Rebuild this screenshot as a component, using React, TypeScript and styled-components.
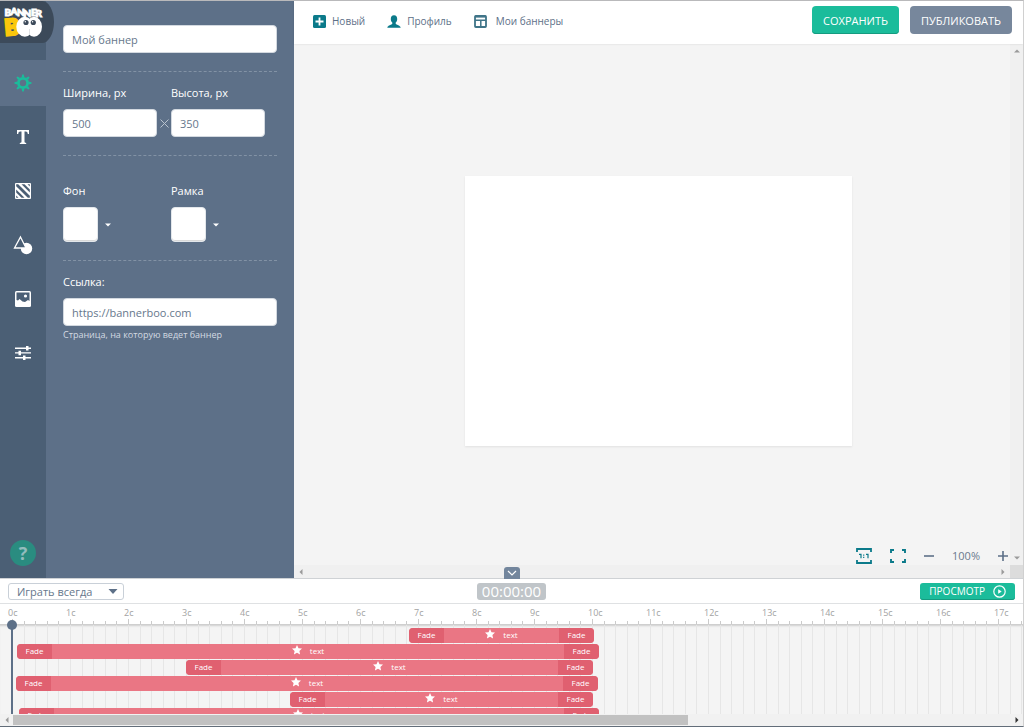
import React from 'react';
import styled, { createGlobalStyle } from 'styled-components';

const colors = {
  rail: '#4b5f75',
  panel: '#5d7088',
  logo: '#3c4a5a',
  green: '#1bbc9b',
  teal: '#0b7a8a',
  slate: '#5d7088',
  bar: '#ea7684',
  barEdge: '#e06070',
};

const SECOND = 58;

const GlobalStyle = createGlobalStyle`
  *, *::before, *::after { box-sizing: border-box; }
  body {
    margin: 0;
    font-family: "Open Sans", "Noto Sans", sans-serif;
    font-size: 11px;
    color: ${colors.slate};
    background: #fff;
  }
  button, input, select { font: inherit; color: inherit; margin: 0; }
  button { border: 0; padding: 0; background: none; cursor: pointer; }
  svg { display: block; }
`;

const Page = styled.div`
  display: flex;
  flex-direction: column;
  min-height: 100vh;
  border-top: 1px solid #b9b9bb;
  border-right: 1px solid #d0d0d0;
  border-bottom: 1px solid #626d79;
  overflow: hidden;
`;

const Workspace = styled.div`
  flex: 1;
  display: grid;
  grid-template-columns: 46px 248px 1fr;
`;

/* Left rail */

const Rail = styled.nav`
  display: flex;
  flex-direction: column;
  gap: 8px;
  background: ${colors.rail};
  padding-bottom: 12px;
`;

const Logo = styled.a`
  position: relative;
  z-index: 1;
  width: 54px;
  height: 42px;
  margin-bottom: 9px;
  background: ${colors.logo};
  border-radius: 0 12px 12px 0 / 0 21px 21px 0;
`;

const RailButton = styled.button<{ $active?: boolean }>`
  display: grid;
  place-items: center;
  height: 46px;
  color: ${(p) => (p.$active ? colors.green : '#fff')};
  background: ${(p) => (p.$active ? colors.panel : 'transparent')};
`;

const HelpButton = styled.button`
  width: 26px;
  height: 26px;
  margin: auto auto 0;
  border-radius: 50%;
  background: #2a8c80;
  color: #93bcbd;
  font-size: 18px;
  line-height: 26px;
  font-weight: 700;
`;

/* Settings panel */

const Panel = styled.form`
  background: ${colors.panel};
  padding: 24px 17px;
  color: #fff;
`;

const Section = styled.section<{ $top?: number; $last?: boolean }>`
  padding: ${(p) => p.$top ?? 12}px 0 18px;
  border-bottom: ${(p) => (p.$last ? '0' : '1px dashed #8292a5')};
`;

const Columns = styled.div`
  display: flex;
`;

const Column = styled.div`
  flex: 0 0 108px;
`;

const Label = styled.label`
  display: block;
  height: 18px;
  margin-bottom: 7px;
  font-size: 11px;
  line-height: 18px;
  font-weight: 500;
`;

const TextInput = styled.input`
  display: block;
  width: 100%;
  height: 28px;
  padding: 0 8px;
  border: 1px solid #d3d9e0;
  border-radius: 4px;
  background: #fff;
  color: #66778c;
  font-size: 11px;
  outline: 0;
`;

const SizeField = styled.div`
  display: grid;
  grid-template-columns: 94px 14px;
  align-items: center;
  justify-items: center;
`;

const SwatchField = styled.div`
  display: flex;
  align-items: center;
  gap: 7px;
`;

const Swatch = styled.button`
  width: 35px;
  height: 35px;
  border: 1px solid #e3e7eb;
  border-radius: 4px;
  background: #fff;
  box-shadow: inset 0 -1px 0 rgba(0, 0, 0, 0.15);
`;

const Hint = styled.p`
  margin: 0;
  font-size: 9px;
  line-height: 18px;
  color: #d3dae2;
`;

/* Main area */

const Main = styled.main`
  display: flex;
  flex-direction: column;
  min-width: 0;
`;

const TopBar = styled.header`
  display: flex;
  align-items: flex-start;
  justify-content: space-between;
  height: 43px;
  padding: 5px 11px 0 19px;
  background: #fff;
  box-shadow: 0 0 2px rgba(0, 0, 0, 0.12);
  z-index: 0;
`;

const Menu = styled.nav`
  display: flex;
  gap: 22px;
`;

const MenuLink = styled.a`
  display: flex;
  align-items: center;
  gap: 6px;
  height: 30px;
  font-size: 10px;
  color: ${colors.slate};
  text-decoration: none;
  svg { color: ${colors.teal}; }
`;

const Actions = styled.div`
  display: flex;
  gap: 11px;
`;

const ActionButton = styled.button<{ $primary?: boolean }>`
  height: 28px;
  padding: 0 11px;
  border-radius: 4px;
  color: #fff;
  font-size: 11px;
  font-weight: 500;
  background: ${(p) => (p.$primary ? colors.green : '#77879c')};
  box-shadow: ${(p) => (p.$primary ? 'inset 0 -1px 0 #159b80' : 'none')};
`;

const Canvas = styled.div`
  flex: 1;
  display: grid;
  grid-template-columns: 1fr 13px;
  grid-template-rows: 1fr 13px;
  background: #f4f4f4;
`;

const Stage = styled.div`
  grid-area: 1 / 1 / -1 / -1;
  display: grid;
  place-items: center;
`;

const Artboard = styled.div`
  width: 387px;
  height: 270px;
  background: #fff;
  box-shadow: 0 1px 2px rgba(0, 0, 0, 0.08);
`;

const VerticalScroll = styled.div`
  grid-area: 1 / 2;
  display: flex;
  flex-direction: column;
  justify-content: space-between;
  align-items: center;
  padding: 4px 0;
  background: #f0f0f0;
`;

const HorizontalScroll = styled.div`
  grid-area: 2 / 1;
  display: flex;
  justify-content: space-between;
  align-items: center;
  padding: 0 4px;
  background: #f0f0f0;
`;

const ScrollCorner = styled.div`
  grid-area: 2 / 2;
  background: #dcdcdc;
`;

const ZoomBar = styled.div`
  grid-area: 1 / 1;
  align-self: end;
  justify-self: end;
  display: flex;
  align-items: center;
  gap: 18px;
  padding: 0 2px 0 0;
  font-size: 11px;
  line-height: 18px;
  color: #6b7a8d;
  z-index: 0;
`;

/* Timeline */

const Timeline = styled.section`
  position: relative;
  border-top: 1px solid #cfd2d5;
  background: #fff;
`;

const CollapseButton = styled.button`
  position: absolute;
  left: 50%;
  bottom: 100%;
  display: grid;
  place-items: center;
  width: 16px;
  height: 12px;
  margin-left: -8px;
  border-radius: 3px 3px 0 0;
  background: #73869d;
`;

const TimelineBar = styled.div`
  display: grid;
  grid-template-columns: 1fr auto 1fr;
  align-items: center;
  height: 25px;
  padding: 0 8px;
  border-bottom: 1px solid #dfe1e3;
`;

const SelectBox = styled.div`
  display: grid;
  grid-template-columns: 1fr 16px;
  align-items: center;
  width: 116px;
  svg { grid-area: 1 / 2; pointer-events: none; }
`;

const Select = styled.select`
  grid-area: 1 / 1 / 2 / -1;
  appearance: none;
  width: 100%;
  height: 17px;
  padding: 0 8px;
  border: 1px solid #c9d0d8;
  border-radius: 3px;
  background: #fff;
  color: #66778c;
  font-size: 11px;
  line-height: 15px;
`;

const TimeCode = styled.output`
  padding: 0 5px;
  border-radius: 3px;
  background: #c0c5c9;
  color: #fff;
  font-size: 15px;
  line-height: 17px;
`;

const PreviewButton = styled.button`
  justify-self: end;
  display: flex;
  align-items: center;
  gap: 8px;
  height: 17px;
  padding: 0 9px;
  border-radius: 3px;
  background: ${colors.green};
  box-shadow: inset 0 -1px 0 #159b80;
  color: #fff;
  font-size: 10px;
  font-weight: 500;
`;

const Ruler = styled.div`
  height: 21px;
  overflow: hidden;
  border-bottom: 1px solid #cfcfcf;
`;

const RulerLabels = styled.div`
  display: flex;
  margin-left: 8px;
  height: 15px;
  font-size: 9px;
  line-height: 17px;
  color: #a3a3a3;
`;

const RulerLabel = styled.span`
  flex: 0 0 ${SECOND}px;
`;

const Ticks = styled.div`
  display: flex;
  margin-left: 12px;
`;

const TickGroup = styled.div`
  flex: 0 0 ${SECOND}px;
  display: flex;
  align-items: flex-end;
`;

const Tick = styled.i<{ $major?: boolean }>`
  flex: 1;
  height: ${(p) => (p.$major ? 5 : 3)}px;
  border-left: 1px solid #cbcbcb;
`;

const Tracks = styled.div`
  display: grid;
  height: 89px;
  overflow: hidden;
  background: #f4f4f4;
  box-shadow: inset 0 2px 2px -1px rgba(0, 0, 0, 0.15);
`;

const GridLines = styled(Ticks)`
  grid-area: 1 / 1;
  min-width: 0;
`;

const GridLine = styled.i`
  flex: 1;
  align-self: stretch;
  border-left: 1px solid #e6e6e6;
`;

const TrackList = styled.div`
  grid-area: 1 / 1;
  display: flex;
  flex-direction: column;
  gap: 1px;
  min-width: 0;
  padding-top: 3px;
`;

const Bar = styled.div`
  flex: 0 0 15px;
  display: flex;
  justify-content: space-between;
  border-radius: 4px;
  overflow: hidden;
  background: ${colors.bar};
  color: #fff;
  font-size: 8px;
  line-height: 14px;
`;

const Fade = styled.span`
  width: 35px;
  text-align: center;
  font-weight: 500;
  background: ${colors.barEdge};
`;

const BarTitle = styled.span`
  display: flex;
  align-items: flex-start;
  gap: 8px;
  svg { margin-top: 1px; }
`;

const Playhead = styled.div`
  position: absolute;
  left: 11px;
  top: 46px;
  bottom: 12px;
  width: 2px;
  background: ${colors.slate};
  &::before {
    content: '';
    position: absolute;
    left: -4px;
    top: -5px;
    width: 10px;
    height: 10px;
    border-radius: 50%;
    background: ${colors.slate};
  }
`;

const TimelineScroll = styled.div`
  display: grid;
  grid-template-columns: 13px 1fr 13px;
  align-items: center;
  justify-items: center;
  height: 12px;
  background: #f1f1f1;
`;

const ScrollThumb = styled.div`
  justify-self: start;
  width: 67.7%;
  height: 10px;
  background: #c1c1c1;
`;

type Direction = 'up' | 'down' | 'left' | 'right';

const arrowShapes: Record<Direction, string> = {
  up: 'M0 4.5L3 1.5L6 4.5Z',
  down: 'M0 1.5L3 4.5L6 1.5Z',
  left: 'M4.5 0L1.5 3L4.5 6Z',
  right: 'M1.5 0L4.5 3L1.5 6Z',
};

const Arrow = ({ dir, color = '#9a9a9a' }: { dir: Direction; color?: string }) => (
  <svg width="6" height="6" viewBox="0 0 6 6" fill={color}>
    <path d={arrowShapes[dir]} />
  </svg>
);

const LogoArt = () => (
  <svg width="54" height="42" viewBox="0 0 54 42" fontFamily="Lato, sans-serif" fontWeight="900">
    <g fill="#fff" stroke="#fff" strokeWidth="0.9" fontSize="10">
      <text x="4.500" y="14.500">B</text>
      <text x="10.500" y="14">A</text>
      <text x="17" y="14.500">N</text>
      <text x="23.500" y="15.500">N</text>
      <text x="31" y="15">E</text>
      <text x="35.500" y="15.500">R</text>
    </g>
    <text x="4.500" y="34" fontSize="22" fill="#fbc70c" stroke="#fbc70c" strokeWidth="2.600" transform="rotate(-5 10 26)">B</text>
    <ellipse cx="24.800" cy="25.800" rx="8.500" ry="10" fill="#fff" />
    <ellipse cx="34" cy="25.800" rx="8" ry="10" fill="#fff" />
    <circle cx="26" cy="21.500" r="2.600" fill="#3c4a5a" />
    <circle cx="33.300" cy="21.500" r="2.600" fill="#3c4a5a" />
    <circle cx="25.300" cy="20.800" r="0.700" fill="#fff" />
    <circle cx="32.600" cy="20.800" r="0.700" fill="#fff" />
    <path d="M29.500 28v6" stroke="#c9ced4" strokeWidth="0.600" />
  </svg>
);

const GearIcon = () => (
  <svg width="18" height="18" viewBox="0 0 18 18" fill="none" stroke="currentColor">
    <circle cx="9" cy="9" r="4.600" strokeWidth="2.800" />
    {[0, 45, 90, 135, 180, 225, 270, 315].map((a) => (
      <path key={a} d="M7.600 3.500L8.200 0.500H9.800L10.400 3.500Z" fill="currentColor" stroke="none" transform={`rotate(${a} 9 9)`} />
    ))}
  </svg>
);

const TextIcon = () => (
  <svg width="14" height="16" viewBox="0 0 14 16" fill="#fff">
    <path d="M1 1H13V5H11.800C11.500 3.200 11 2.500 9.600 2.500H8.500V12.500C8.500 13.500 9 13.800 10.200 13.900V15H3.800V13.900C5 13.800 5.500 13.500 5.500 12.500V2.500H4.400C3 2.500 2.500 3.200 2.200 5H1Z" />
  </svg>
);

const PatternIcon = () => (
  <svg width="16" height="16" viewBox="0 0 16 16">
    <rect width="16" height="16" rx="1" fill="#fff" />
    <g fill="#4b5f75">
      <path d="M1.200 1.200H3.200L14.800 12.800V14.800H12.800L1.200 3.200Z" />
      <path d="M6.500 1.200H9.500L14.800 6.500V9.500Z" />
      <path d="M1.200 6.500V9.500L6.500 14.800H9.500Z" />
      <path d="M12.500 1.200H14.800V3.500ZM1.200 12.500V14.800H3.500Z" />
    </g>
  </svg>
);

const ShapesIcon = () => (
  <svg width="20" height="20" viewBox="0 0 20 20">
    <circle cx="13.500" cy="13.500" r="5.700" fill="#fff" />
    <path d="M7.500 2L13 13H1.500Z" fill="#4b5f75" stroke="#fff" strokeWidth="1.300" />
  </svg>
);

const ImageIcon = () => (
  <svg width="16" height="16" viewBox="0 0 16 16">
    <rect width="16" height="16" rx="1.500" fill="#fff" />
    <path d="M1.500 1.500H14.500V10L13 9L10 11L7.500 10.500L4.500 8L3 9.500L1.500 9Z" fill="#4b5f75" />
    <circle cx="10.500" cy="5" r="1.600" fill="#fff" />
  </svg>
);

const SlidersIcon = () => (
  <svg width="16" height="16" viewBox="0 0 16 16" fill="#fff">
    <path d="M0 2.600H16V3.900H0ZM0 7.300H16V8.600H0ZM0 12.100H16V13.400H0Z" />
    <path d="M11 1H13.500V5.500H11ZM3.500 5.700H6V10.200H3.500ZM8 10.500H10.500V15H8Z" />
  </svg>
);

const PlusBoxIcon = () => (
  <svg width="13" height="13" viewBox="0 0 13 13">
    <rect width="13" height="13" rx="1.500" fill="currentColor" />
    <path d="M6.500 2.500V10.500M2.500 6.500H10.500" stroke="#fff" strokeWidth="1.800" />
  </svg>
);

const UserIcon = () => (
  <svg width="14" height="13" viewBox="0 0 14 13" fill="currentColor">
    <path d="M7 0.200C9.200 0.200 10.200 1.800 10.200 4C10.200 5.700 9.500 7 8.700 7.600V8.800C9 9.800 13.300 10.200 13.700 12.700H0.300C0.700 10.200 5 9.800 5.300 8.800V7.600C4.500 7 3.800 5.700 3.800 4C3.800 1.800 4.800 0.200 7 0.200Z" />
  </svg>
);

const LayoutIcon = () => (
  <svg width="16" height="13" viewBox="0 0 16 13" fill="none" stroke="#3f7488" strokeWidth="1.800">
    <rect x="1" y="1" width="11" height="11" rx="0.800" />
    <path d="M1 5.200H12M6.800 5.200V12" strokeWidth="1.500" />
    <path d="M1 1.600H12" strokeWidth="2" />
  </svg>
);

const ActualSizeIcon = () => (
  <svg width="16" height="16" viewBox="0 0 16 16" fill="none" stroke={colors.teal}>
    <path d="M1 4V1H15V4M1 12V15H15V12" strokeWidth="1.800" />
    <path d="M3 6.300H5V10.300M10 6.300H12V10.300" strokeWidth="1.200" />
    <path d="M7.700 6.500V7.700M7.700 8.800V10" strokeWidth="1.200" />
  </svg>
);

const FullscreenIcon = () => (
  <svg width="16" height="14" viewBox="0 0 16 14" fill="none" stroke={colors.teal} strokeWidth="1.900">
    <path d="M1 4V1H4M12 1H15V4M15 10V13H12M4 13H1V10" />
  </svg>
);

const MinusIcon = () => (
  <svg width="10" height="10" viewBox="0 0 10 10" stroke={colors.slate} strokeWidth="1.600">
    <path d="M0 5H10" />
  </svg>
);

const PlusIcon = () => (
  <svg width="10" height="10" viewBox="0 0 10 10" stroke={colors.slate} strokeWidth="1.600">
    <path d="M0 5H10M5 0V10" />
  </svg>
);

const StarIcon = () => (
  <svg width="10" height="10" viewBox="0 0 10 10" fill="#fff">
    <path d="M5 0L6.500 3.200L10 3.600L7.400 6L8.100 9.500L5 7.800L1.900 9.500L2.600 6L0 3.600L3.500 3.200Z" />
  </svg>
);

const PlayIcon = () => (
  <svg width="13" height="13" viewBox="0 0 13 13" fill="none" stroke="#fff">
    <circle cx="6.500" cy="6.500" r="5.700" strokeWidth="1.200" />
    <path d="M5.200 4.300L8.700 6.500L5.200 8.700Z" fill="#fff" stroke="none" />
  </svg>
);

const tools = [
  { name: 'Текст', icon: <TextIcon /> },
  { name: 'Фон', icon: <PatternIcon /> },
  { name: 'Фигуры', icon: <ShapesIcon /> },
  { name: 'Изображения', icon: <ImageIcon /> },
  { name: 'Настройки', icon: <SlidersIcon /> },
];

const seconds = Array.from({ length: 18 }, (_, i) => i);
const fifths = [0, 1, 2, 3, 4];

const layers = [
  { start: 409, end: 594 },
  { start: 17, end: 599 },
  { start: 186, end: 593 },
  { start: 16, end: 598 },
  { start: 290, end: 593 },
  { start: 19, end: 599 },
];

export default function App() {
  return (
    <>
      <GlobalStyle />
      <Page>
        <Workspace>
          <Rail>
            <Logo href="#" aria-label="BannerBoo">
              <LogoArt />
            </Logo>
            <RailButton $active aria-label="Параметры">
              <GearIcon />
            </RailButton>
            {tools.map((t) => (
              <RailButton key={t.name} aria-label={t.name}>
                {t.icon}
              </RailButton>
            ))}
            <HelpButton>?</HelpButton>
          </Rail>

          <Panel>
            <TextInput aria-label="Название" defaultValue="Мой баннер" />
            <Section $top={0} />
            <Section>
              <Columns>
                <Column>
                  <Label htmlFor="width">Ширина, px</Label>
                  <SizeField>
                    <TextInput id="width" defaultValue="500" />
                    <svg width="9" height="9" viewBox="0 0 9 9" stroke="#b9c3ce" strokeWidth="1">
                      <path d="M0.500 0.500L8.500 8.500M8.500 0.500L0.500 8.500" />
                    </svg>
                  </SizeField>
                </Column>
                <Column>
                  <Label htmlFor="height">Высота, px</Label>
                  <SizeField>
                    <TextInput id="height" defaultValue="350" />
                  </SizeField>
                </Column>
              </Columns>
            </Section>
            <Section $top={26}>
              <Columns>
                <Column>
                  <Label htmlFor="fill">Фон</Label>
                  <SwatchField>
                    <Swatch id="fill" type="button" />
                    <Arrow dir="down" color="#fff" />
                  </SwatchField>
                </Column>
                <Column>
                  <Label htmlFor="frame">Рамка</Label>
                  <SwatchField>
                    <Swatch id="frame" type="button" />
                    <Arrow dir="down" color="#fff" />
                  </SwatchField>
                </Column>
              </Columns>
            </Section>
            <Section $last>
              <Label htmlFor="link">Ссылка:</Label>
              <TextInput id="link" defaultValue="https://bannerboo.com" />
              <Hint>Страница, на которую ведет баннер</Hint>
            </Section>
          </Panel>

          <Main>
            <TopBar>
              <Menu>
                <MenuLink href="#"><PlusBoxIcon />Новый</MenuLink>
                <MenuLink href="#"><UserIcon />Профиль</MenuLink>
                <MenuLink href="#"><LayoutIcon />Мои баннеры</MenuLink>
              </Menu>
              <Actions>
                <ActionButton $primary>СОХРАНИТЬ</ActionButton>
                <ActionButton>ПУБЛИКОВАТЬ</ActionButton>
              </Actions>
            </TopBar>
            <Canvas>
              <Stage>
                <Artboard />
              </Stage>
              <VerticalScroll>
                <Arrow dir="up" />
                <Arrow dir="down" />
              </VerticalScroll>
              <HorizontalScroll>
                <Arrow dir="left" />
                <Arrow dir="right" />
              </HorizontalScroll>
              <ScrollCorner />
              <ZoomBar>
                <button aria-label="Реальный размер"><ActualSizeIcon /></button>
                <button aria-label="Во весь экран"><FullscreenIcon /></button>
                <button aria-label="Уменьшить"><MinusIcon /></button>
                <span>100%</span>
                <button aria-label="Увеличить"><PlusIcon /></button>
              </ZoomBar>
            </Canvas>
          </Main>
        </Workspace>

        <Timeline>
          <CollapseButton aria-label="Свернуть">
            <svg width="10" height="6" viewBox="0 0 10 6" fill="none" stroke="#fff" strokeWidth="1.200">
              <path d="M1 1L5 5L9 1" />
            </svg>
          </CollapseButton>
          <TimelineBar>
            <SelectBox>
              <Select aria-label="Повтор">
                <option>Играть всегда</option>
              </Select>
              <svg width="10" height="5" viewBox="0 0 10 5" fill={colors.slate}>
                <path d="M0.500 0H9.500L5 5Z" />
              </svg>
            </SelectBox>
            <TimeCode>00:00:00</TimeCode>
            <PreviewButton>
              ПРОСМОТР
              <PlayIcon />
            </PreviewButton>
          </TimelineBar>
          <Ruler>
            <RulerLabels>
              {seconds.map((s) => (
                <RulerLabel key={s}>{s}с</RulerLabel>
              ))}
            </RulerLabels>
            <Ticks>
              {seconds.map((s) => (
                <TickGroup key={s}>
                  {fifths.map((f) => (
                    <Tick key={f} $major={f === 0} />
                  ))}
                </TickGroup>
              ))}
            </Ticks>
          </Ruler>
          <Tracks>
            <GridLines>
              {seconds.map((s) => (
                <TickGroup key={s}>
                  {fifths.map((f) => (
                    <GridLine key={f} />
                  ))}
                </TickGroup>
              ))}
            </GridLines>
            <TrackList>
              {layers.map((l) => (
                <Bar key={`${l.start}-${l.end}`} style={{ marginLeft: l.start, width: l.end - l.start }}>
                  <Fade>Fade</Fade>
                  <BarTitle>
                    <StarIcon />
                    text
                  </BarTitle>
                  <Fade>Fade</Fade>
                </Bar>
              ))}
            </TrackList>
          </Tracks>
          <TimelineScroll>
            <Arrow dir="left" />
            <ScrollThumb />
            <Arrow dir="right" color="#333" />
          </TimelineScroll>
          <Playhead />
        </Timeline>
      </Page>
    </>
  );
}
